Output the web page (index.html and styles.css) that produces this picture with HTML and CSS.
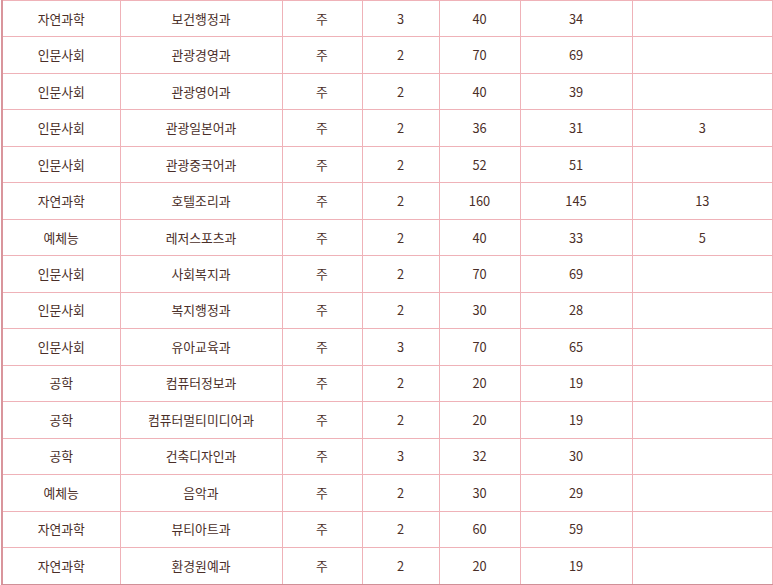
FILE: index.html
```html
<!DOCTYPE html>
<html lang="ko">
<head>
<meta charset="utf-8">
<link rel="stylesheet" href="styles.css">
</head>
<body>
<table class="grid">
<colgroup>
<col class="c1"><col class="c2"><col class="c3"><col class="c4"><col class="c5"><col class="c6"><col class="c7">
</colgroup>
<tbody>
<tr><td>자연과학</td><td>보건행정과</td><td>주</td><td>3</td><td>40</td><td>34</td><td></td></tr>
<tr><td>인문사회</td><td>관광경영과</td><td>주</td><td>2</td><td>70</td><td>69</td><td></td></tr>
<tr><td>인문사회</td><td>관광영어과</td><td>주</td><td>2</td><td>40</td><td>39</td><td></td></tr>
<tr><td>인문사회</td><td>관광일본어과</td><td>주</td><td>2</td><td>36</td><td>31</td><td>3</td></tr>
<tr><td>인문사회</td><td>관광중국어과</td><td>주</td><td>2</td><td>52</td><td>51</td><td></td></tr>
<tr><td>자연과학</td><td>호텔조리과</td><td>주</td><td>2</td><td>160</td><td>145</td><td>13</td></tr>
<tr><td>예체능</td><td>레저스포츠과</td><td>주</td><td>2</td><td>40</td><td>33</td><td>5</td></tr>
<tr><td>인문사회</td><td>사회복지과</td><td>주</td><td>2</td><td>70</td><td>69</td><td></td></tr>
<tr><td>인문사회</td><td>복지행정과</td><td>주</td><td>2</td><td>30</td><td>28</td><td></td></tr>
<tr><td>인문사회</td><td>유아교육과</td><td>주</td><td>3</td><td>70</td><td>65</td><td></td></tr>
<tr><td>공학</td><td>컴퓨터정보과</td><td>주</td><td>2</td><td>20</td><td>19</td><td></td></tr>
<tr><td>공학</td><td>컴퓨터멀티미디어과</td><td>주</td><td>2</td><td>20</td><td>19</td><td></td></tr>
<tr><td>공학</td><td>건축디자인과</td><td>주</td><td>3</td><td>32</td><td>30</td><td></td></tr>
<tr><td>예체능</td><td>음악과</td><td>주</td><td>2</td><td>30</td><td>29</td><td></td></tr>
<tr><td>자연과학</td><td>뷰티아트과</td><td>주</td><td>2</td><td>60</td><td>59</td><td></td></tr>
<tr><td>자연과학</td><td>환경원예과</td><td>주</td><td>2</td><td>20</td><td>19</td><td></td></tr>
</tbody>
</table>
</body>
</html>
```
FILE: styles.css
```css
html, body {
  margin: 0;
  padding: 0;
  background: #ffffff;
}
body {
  padding: 0 0 0 1px;
}
.grid {
  border-collapse: collapse;
  table-layout: fixed;
  width: 772px;
  font-family: "Noto Sans CJK KR", "Noto Sans", sans-serif;
  font-size: 12.8px;
  color: #4a2e28;
  border-left: 2px solid #d9959c;
  border-bottom: 2px solid #d09098;
  border-right: 1px solid #ebb1b7;
}
.c1 { width: 118px; }
.c2 { width: 162px; }
.c3 { width: 80px; }
.c4 { width: 77px; }
.c5 { width: 81px; }
.c6 { width: 112px; }
.c7 { width: auto; }
.grid td {
  border: 1px solid #efb2b8;
  height: 35.48px;
  padding: 0;
  text-align: center;
  vertical-align: middle;
  line-height: 16px;
}
```
